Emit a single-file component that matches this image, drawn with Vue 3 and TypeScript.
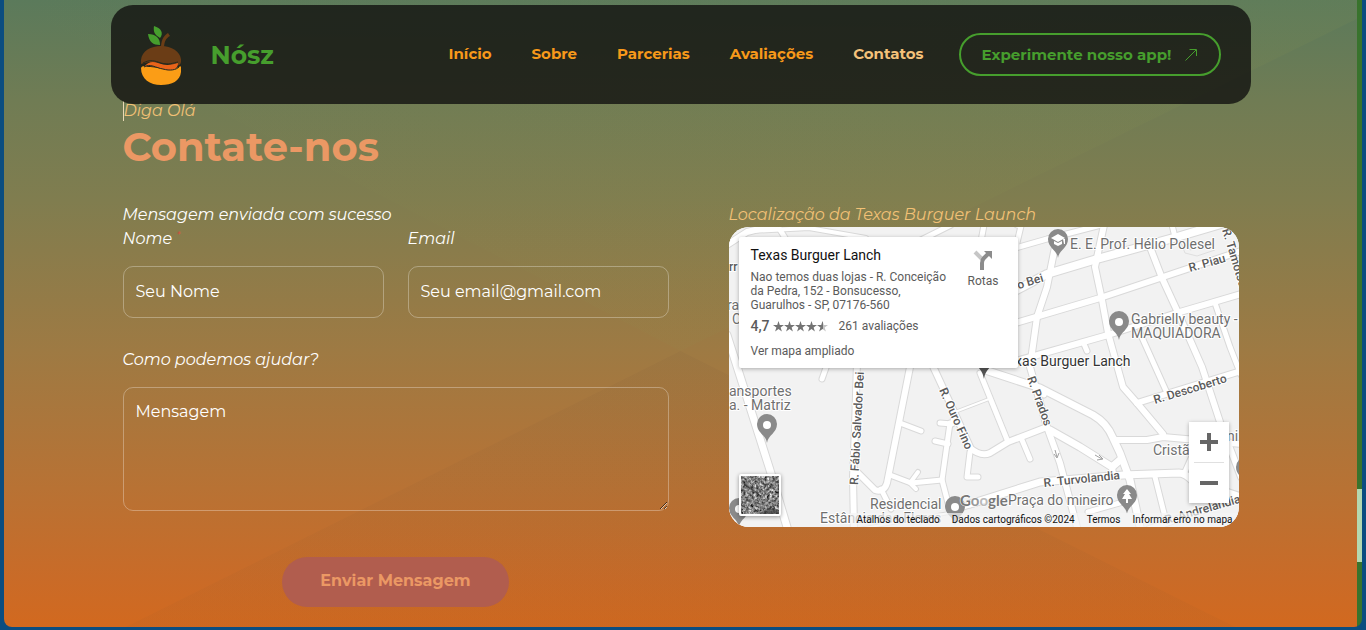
<script setup lang="ts">
import { ref } from 'vue'

interface NavItem { label: string; href: string; active?: boolean }
interface Road { d: string; w: number }
interface Label { text: string; x: number; y: number; rotate?: number; kind: 'poi' | 'street' | 'dark' }

const nav: NavItem[] = [
  { label: 'Início', href: '#inicio' },
  { label: 'Sobre', href: '#sobre' },
  { label: 'Parcerias', href: '#parcerias' },
  { label: 'Avaliações', href: '#avaliacoes' },
  { label: 'Contatos', href: '#contatos', active: true },
]

const nome = ref('')
const email = ref('')
const mensagem = ref('')

const roads: Road[] = [
  { d: 'M280 67 L318 47 L368 32 L448 10 L492 -3', w: 8 },
  { d: 'M280 23 L318 12 L372 -2', w: 5 },
  { d: 'M326 20 L318 60 L308 90 L301 140 L318 200 L331 236 L348 300', w: 6 },
  { d: 'M375 -2 L366 40 L373 73 L379 106 L389 142 L394 160 L408 176 L434 207', w: 6 },
  { d: 'M280 98 L371 71 L431 51 L512 24', w: 6 },
  { d: 'M280 136 L379 108 L451 85 L512 67', w: 6 },
  { d: 'M421 20 L433 51 L451 90 L473 140 L491 195 L512 250', w: 6 },
  { d: 'M486 76 L501 120 L512 148', w: 5 },
  { d: 'M411 106 L438 166', w: 5 },
  { d: 'M355 117 L358 124', w: 5 },
  { d: 'M443 -2 L446 10', w: 5 },
  { d: 'M288 -2 L292 -1 L287 20', w: 5 },
  { d: 'M408 176 L512 144', w: 6 },
  { d: 'M256 143 L311 161 L364 188 Q378 196 384 211 L391 226 L401 253 L411 300', w: 7 },
  { d: 'M318 200 L279 215 L261 226 Q252 230 241 221', w: 6 },
  { d: 'M321 203 L351 220 L383 240 L391 233', w: 7 },
  { d: 'M383 240 L384 247', w: 6 },
  { d: 'M386 213 L418 213 L434 210 L512 217', w: 6 },
  { d: 'M241 277 L311 255 L394 248 L450 246 Q456 246 464 254 L512 270', w: 7 },
  { d: 'M455 247 L468 218', w: 5 },
  { d: 'M426 250 L436 290', w: 5 },
  { d: 'M251 146 L279 215', w: 5 },
  { d: 'M311 161 L315 168', w: 5 },
  { d: 'M293 213 L301 232', w: 5 },
  { d: 'M420 302 L512 270', w: 6 },
  { d: 'M359 285 L394 275', w: 5 },
  { d: 'M-2 108 L41 243 L58 300', w: 7 },
  { d: 'M128 135 L126 200 L124 250 L125 302', w: 6 },
  { d: 'M182 135 L158 256 Q155 266 146 263 L126 243', w: 6 },
  { d: 'M152 262 L162 282', w: 5 },
  { d: 'M171 196 L192 204', w: 5 },
  { d: 'M161 248 L182 256 L213 253', w: 5 },
  { d: 'M189 245 L181 256 L187 262', w: 4 },
  { d: 'M221 196 L213 253 L219 276', w: 5 },
  { d: 'M211 196 L223 197 L226 187', w: 5 },
  { d: 'M206 214 L219 217', w: 5 },
  { d: 'M202 135 L221 176 L241 220', w: 6 },
  { d: 'M241 225 L238 250 L249 250', w: 5 },
  { d: 'M226 185 L260 172', w: 2 },
  { d: 'M99 135 L93 152', w: 5 },
  { d: 'M-2 18 L18 5 L50 -3', w: 6 },
  { d: 'M22 4 L80 1 L137 11', w: 4 },
  { d: 'M48 -2 L58 14', w: 5 },
  { d: 'M190 14 L222 -2', w: 5 },
  { d: 'M255 -2 L252 14', w: 5 },
  { d: 'M130 302 L220 286 L252 276', w: 2 },
]

const labels: Label[] = [
  { text: 'E. E. Prof. Hélio Polesel', x: 341, y: 22, kind: 'poi' },
  { text: 'Gabrielly beauty -', x: 402, y: 97, kind: 'poi' },
  { text: 'MAQUIADORA', x: 402, y: 111, kind: 'poi' },
  { text: 'Texas Burguer Lanch', x: 271, y: 139, kind: 'dark' },
  { text: 'ansportes', x: 0, y: 169, kind: 'poi' },
  { text: 'a. - Matriz', x: 0, y: 183, kind: 'poi' },
  { text: 'Residencial', x: 141, y: 282, kind: 'poi' },
  { text: 'Estância das Flores', x: 91, y: 296, kind: 'poi' },
  { text: 'Praça do mineiro', x: 279, y: 278, kind: 'poi' },
  { text: 'ni', x: 498, y: 214, kind: 'poi' },
  { text: 'Cristã do Re', x: 424, y: 228, kind: 'poi' },
  { text: 'ra', x: -2, y: 83, kind: 'poi' },
  { text: 'a C', x: -8, y: 97, kind: 'poi' },
  { text: 'Arr', x: -8, y: 44, kind: 'street' },
  { text: 'R. Piau', x: 461, y: 45, rotate: -16, kind: 'street' },
  { text: 'R. Descoberto', x: 426, y: 177, rotate: -17, kind: 'street' },
  { text: 'R. Turvolandia', x: 315, y: 260, rotate: -6, kind: 'street' },
  { text: 'R. Andrelandia', x: 437, y: 297, rotate: -16, kind: 'street' },
  { text: 'R. Prados', x: 298, y: 151, rotate: 70, kind: 'street' },
  { text: 'R. Ouro Fino', x: 210, y: 163, rotate: 66, kind: 'street' },
  { text: 'R. Fábio Salvador Bei', x: 129, y: 258, rotate: -87, kind: 'street' },
  { text: 'R. Tamotsu', x: 493, y: 3, rotate: 73, kind: 'street' },
  { text: 'R. Salgado Bei', x: 241, y: 77, rotate: -17, kind: 'street' },
]

const pins = [
  { x: 329, y: 14, icon: 'school' },
  { x: 390, y: 96, icon: 'dot' },
  { x: 38, y: 199, icon: 'dot' },
  { x: 10, y: 283, icon: 'dot' },
  { x: 226, y: 281, icon: 'dot' },
  { x: 398, y: 270, icon: 'tree' },
  { x: 517, y: 242, icon: 'dot' },
]
</script>

<template>
  <div class="frame">
    <div class="page">
      <header class="bar">
        <a class="brand" href="#inicio">
          <svg class="logo" viewBox="0 0 40 60" aria-hidden="true">
            <path d="M13 1 C20 3 23 8 19 13 C14 10 12 7 13 1Z" fill="#469e2d" />
            <path d="M7 9 C15 9 19 13 19 20 C12 20 8 17 7 9Z" fill="#469e2d" />
            <path d="M20 23 C20 16 22 11 27 8 L29 11 C25 13 23 17 23 23Z" fill="#6b3d16" />
            <path d="M0 38 C-1 27 9 21 20 21 C32 21 41 28 40 37 C39 41 37 41 34 40 C24 40 14 34 0 39Z" fill="#6b3d16" />
            <path d="M0 43 C2 40 4 42 7 42 C18 41 26 48 38 42 C41 39 40 45 40 47 C39 56 31 60 20 60 C9 60 0 54 0 43Z" fill="#fb9d16" />
            <path d="M3 42 C7 37 11 36 17 38 C25 41 31 40 37 38 C37 44 32 46 25 45 C17 43 10 39 3 42Z" fill="#e9641a" />
            <path d="M3 42 C9 38 15 43 22 44 C29 46 35 45 38 42" fill="none" stroke="#252b1f" stroke-width="1" />
            <path d="M2 38 C9 34 14 36 20 38 C27 40 33 38 37 37" fill="none" stroke="#252b1f" stroke-width="1" />
          </svg>
          <span>Nósz</span>
        </a>
        <nav class="menu">
          <a v-for="item in nav" :key="item.label" :href="item.href" :class="{ active: item.active }">{{ item.label }}</a>
        </nav>
        <a class="app-link" href="#app">
          <span>Experimente nosso app!</span>
          <svg viewBox="0 0 12 12" aria-hidden="true"><path d="M.5 11.5 L11 1 M4.500 .5 H11.500 V7" fill="none" stroke="currentColor" /></svg>
        </a>
      </header>

      <main class="content">
        <p class="hello">Diga Olá</p>
        <h1>Contate-nos</h1>

        <div class="columns">
          <form class="form" @submit.prevent>
            <p class="status">Mensagem enviada com sucesso</p>
            <div class="fields">
              <div class="field">
                <label for="nome">Nome <sup>*</sup></label>
                <input id="nome" v-model="nome" type="text" placeholder="Seu Nome" />
              </div>
              <div class="field">
                <label for="email">Email</label>
                <input id="email" v-model="email" type="email" placeholder="Seu email@gmail.com" />
              </div>
            </div>
            <div class="field">
              <label for="mensagem">Como podemos ajudar?</label>
              <textarea id="mensagem" v-model="mensagem" placeholder="Mensagem"></textarea>
            </div>
            <button class="send" type="submit">Enviar Mensagem</button>
          </form>

          <section class="place">
            <p class="place-title">Localização da Texas Burguer Launch</p>
            <div class="map">
              <svg class="tiles" viewBox="0 0 510 300" preserveAspectRatio="xMinYMin slice">
                <rect width="510" height="300" fill="#f2f2f2" />
                <g fill="none" stroke="#d9d9d9" stroke-linecap="round" stroke-linejoin="round">
                  <path v-for="(r, i) in roads" :key="i" :d="r.d" :stroke-width="r.w + 2" />
                </g>
                <g fill="none" stroke="#fff" stroke-linecap="round" stroke-linejoin="round">
                  <path v-for="(r, i) in roads" :key="i" :d="r.d" :stroke-width="r.w" />
                </g>
                <path d="M452 16 L456 26 L468 29 L486 23 M458 17 L461 23 L480 18" fill="none" stroke="#dedede" />
                <g fill="none" stroke="#a0a0a0" stroke-width="1">
                  <path d="M326 223 L328 230 M325 227 L328 231 L330 226" />
                  <path d="M366 228 L373 232 M370 228 L374 232 L368 233" />
                </g>
                <g v-for="(p, i) in pins" :key="i" :transform="`translate(${p.x} ${p.y})`">
                  <path d="M0 17 C-1 9 -10 7 -10 -2 A10 10 0 0 1 10 -2 C10 7 1 9 0 17Z" fill="#8a8a8a" />
                  <circle v-if="p.icon === 'dot'" cy="-1" r="4" fill="#fff" />
                  <path v-else-if="p.icon === 'school'" d="M-7 -3 L0 -7 L7 -3 L0 1Z M-4 0 L0 2 L4 0 V3 L0 5 L-4 3Z M5 -2 H7 V3 H6Z" fill="#fff" />
                  <path v-else d="M0 -8 L4 -3 H2 L5 2 H1 V6 H-1 V2 H-5 L-2 -3 H-4Z" fill="#fff" />
                </g>
                <path d="M245 130 H265 C264 142 257 140 255 152 C253 140 247 142 245 130Z" fill="#555" />
                <text
                  v-for="l in labels"
                  :key="l.text"
                  :class="l.kind"
                  :transform="`translate(${l.x} ${l.y}) rotate(${l.rotate ?? 0})`"
                >{{ l.text }}</text>
                <text class="google" x="231" y="279">G<tspan fill="#999">o</tspan><tspan fill="#bbb">o</tspan>gle</text>
              </svg>

              <article class="card">
                <div class="card-main">
                  <h2>Texas Burguer Lanch</h2>
                  <address>Nao temos duas lojas - R. Conceição da Pedra, 152 - Bonsucesso, Guarulhos - SP, 07176-560</address>
                  <div class="rating">
                    <b>4,7</b>
                    <svg viewBox="0 0 55 11" role="img" aria-label="4,7 de 5">
                      <defs>
                        <linearGradient id="half"><stop offset=".55" stop-color="#737373" /><stop offset=".55" stop-color="#c4c4c4" /></linearGradient>
                      </defs>
                      <path
                        v-for="n in 5"
                        :key="n"
                        d="M5.500 0 L6.800 4 H11 L7.600 6.500 L8.900 10.500 L5.500 8 L2.100 10.500 L3.400 6.500 L0 4 H4.200Z"
                        :transform="`translate(${(n - 1) * 11} 0)`"
                        :fill="n === 5 ? 'url(#half)' : '#737373'"
                      />
                    </svg>
                    <a href="#avaliacoes">261 avaliações</a>
                  </div>
                  <a href="#mapa">Ver mapa ampliado</a>
                </div>
                <a class="routes" href="#rotas">
                  <svg viewBox="0 0 20 20" aria-hidden="true">
                    <path d="M2 2 L10 10" stroke="#c6c6c6" stroke-width="4" />
                    <path d="M9 20 V13 Q9 10 11 8 L15 4" fill="none" stroke="#8c8c8c" stroke-width="4" />
                    <path d="M11 1 H19 V9Z" fill="#8c8c8c" />
                  </svg>
                  <span>Rotas</span>
                </a>
              </article>

              <button class="satellite" type="button" aria-label="Mostrar imagens de satélite">
                <svg viewBox="0 0 38 38" aria-hidden="true">
                  <filter id="grain" x="0" y="0" width="1" height="1" color-interpolation-filters="sRGB">
                    <feTurbulence type="fractalNoise" baseFrequency=".38" numOctaves="3" seed="7" />
                    <feColorMatrix values="1.1 .6 0 0 -.35  1.100 .6 0 0 -.35  1.100 .6 0 0 -.35  0 0 0 0 1" />
                  </filter>
                  <rect width="38" height="38" filter="url(#grain)" />
                  <path d="M3 8 L16 17" stroke="#333" stroke-width="2" opacity=".6" />
                  <path d="M18 38 L28 32 L38 34 V38Z" fill="#333" opacity=".6" />
                </svg>
              </button>

              <div class="zoom">
                <button type="button" aria-label="Aumentar o zoom"><svg viewBox="0 0 18 18"><path d="M7 0H11V7H18V11H11V18H7V11H0V7H7Z" /></svg></button>
                <button type="button" aria-label="Diminuir o zoom"><svg viewBox="0 0 18 18"><path d="M0 7H18V11H0Z" /></svg></button>
              </div>

              <footer class="credits">
                <button type="button">Atalhos do teclado</button>
                <span>Dados cartográficos ©2024</span>
                <a href="#termos">Termos</a>
                <a href="#erro">Informar erro no mapa</a>
              </footer>
            </div>
          </section>
        </div>
      </main>
    </div>
    <div class="track"><div class="thumb"></div></div>
  </div>
</template>

<style>
body {
  background: #0b4d80;
}
</style>

<style scoped>
* {
  box-sizing: border-box;
}

.frame {
  display: flex;
  min-height: calc(100vh - 3px);
  margin: 0 4px 3px;
  overflow: hidden;
  border-radius: 0 0 8px 8px;
  font-family: Montserrat, Inter, "Liberation Sans", sans-serif;
}

.page {
  position: relative;
  z-index: 0;
  flex: 1;
  min-width: 0;
  padding: 5px 24px 20px;
  background: linear-gradient(#5b7a5b, #707c54 16%, #807d4f 32%, #9e7a43 56%, #b87234 78%, #c96b28 92%, #d2691f);
}

.page::before,
.page::after {
  content: "";
  position: absolute;
  z-index: -1;
  inset: 0;
}

.page::before {
  clip-path: polygon(0 0, 50% 56%, 100% 3%, 100% 0);
  background: linear-gradient(100deg, rgba(140, 150, 80, 0), rgba(140, 150, 80, 0.12));
}

.page::after {
  clip-path: polygon(9% 100%, 50% 56%, 91% 100%);
  background: linear-gradient(rgba(100, 90, 75, 0.12), rgba(150, 90, 40, 0.08));
}

.bar {
  position: relative;
  z-index: 1;
  display: flex;
  align-items: center;
  max-width: 1140px;
  height: 99px;
  margin: 0 auto;
  padding: 0 30px;
  border-radius: 22px;
  background: rgba(18, 18, 16, 0.81);
}

a {
  color: inherit;
  text-decoration: none;
}

.brand {
  display: flex;
  align-items: center;
  gap: 30px;
  color: #469e2d;
  font-size: 25px;
  font-weight: 700;
}

.logo {
  width: 40px;
  height: 60px;
}

.menu {
  display: flex;
  gap: 40px;
  margin: 0 35px 0 auto;
  padding-bottom: 2px;
  color: #f7991a;
  font-size: 15px;
  font-weight: 700;
}

.active {
  color: #f5c27a;
}

.app-link {
  display: flex;
  align-items: center;
  justify-content: center;
  gap: 14px;
  width: 262px;
  height: 43px;
  border: 2px solid #469e2d;
  border-radius: 22px;
  color: #469e2d;
  font-size: 15px;
  font-weight: 700;
}

.app-link svg {
  width: 12px;
  height: 12px;
}

.content {
  max-width: 1116px;
  margin: -4px auto 0;
  color: #fff;
}

p {
  margin: 0;
  font-size: 16px;
  font-style: italic;
  line-height: 24px;
}

.hello {
  width: max-content;
  margin-top: 1px;
  border-left: 1px solid #e9d9b5;
  color: #f2c176;
  line-height: 20px;
}

h1 {
  margin: 1px 0 31px;
  color: #eb9864;
  font-size: 40px;
  font-weight: 700;
  line-height: 50px;
}

.columns {
  display: grid;
  grid-template-columns: 546fr 510fr;
  gap: 60px;
}

.form {
  display: flex;
  flex-direction: column;
}

.fields {
  display: grid;
  grid-template-columns: 1fr 1fr;
  gap: 24px;
  margin-bottom: 30px;
}

.field {
  display: flex;
  flex-direction: column;
  gap: 15px;
}

label,
.status {
  font-size: 16px;
  font-style: italic;
  font-weight: 400;
  line-height: 24px;
}

sup {
  color: #e0453a;
  font-size: 10px;
  line-height: 0;
}

input,
textarea {
  width: 100%;
  border: 1px solid rgba(255, 255, 255, 0.3);
  border-radius: 10px;
  outline: 0;
  background: transparent;
  color: #fff;
  font: 400 16px/24px Montserrat, Inter, "Liberation Sans", sans-serif;
}

input {
  height: 52px;
  padding: 0 12px 2px;
}

textarea {
  display: block;
  height: 124px;
  padding: 12px;
}

::placeholder {
  color: #fff;
  opacity: 1;
}

.send {
  align-self: center;
  width: 227px;
  height: 50px;
  margin-top: 46px;
  padding-bottom: 3px;
  border: 0;
  border-radius: 25px;
  background: #b15d4e;
  color: #eb9864;
  font: 700 16px/24px Montserrat, Inter, "Liberation Sans", sans-serif;
}

.place-title {
  color: #f2c176;
}

.map {
  position: relative;
  height: 300px;
  overflow: hidden;
  border-radius: 20px;
  background: #f2f2f2;
  font-family: Roboto, sans-serif;
}

.tiles {
  display: block;
  width: 100%;
  height: 100%;
}

.tiles text {
  paint-order: stroke;
  stroke: #fff;
  stroke-width: 2px;
  stroke-linejoin: round;
}

.poi {
  fill: #6f6f6f;
  font-size: 14px;
}

.dark {
  fill: #333;
  font-size: 14px;
}

.street {
  fill: #5a5a5a;
  font-size: 12px;
  font-weight: 500;
}

.tiles .google {
  fill: #777;
  stroke-width: 1px;
  font: 700 15px Lato, sans-serif;
}

.card {
  position: absolute;
  top: 10px;
  left: 10px;
  display: flex;
  justify-content: space-between;
  width: 279px;
  height: 131px;
  padding: 10px 19px 0 12px;
  border-radius: 2px;
  background: #fff;
  box-shadow: 0 1px 4px rgba(0, 0, 0, 0.3);
  color: #5b5b5b;
  font-size: 12px;
  line-height: 14px;
}

.card-main {
  width: 198px;
}

h2 {
  margin: 0 0 6px;
  color: #111;
  font-size: 14px;
  font-weight: 400;
  line-height: 17px;
}

address {
  font-style: normal;
}

.rating {
  display: flex;
  align-items: center;
  height: 16px;
  margin: 6px 0 10px;
}

.rating b {
  font-size: 14px;
  font-weight: 500;
}

.rating svg {
  width: 55px;
  height: 11px;
  margin: 0 11px 0 3px;
}

.routes {
  display: flex;
  flex-direction: column;
  align-items: center;
  gap: 4px;
  padding-top: 3px;
}

.routes svg {
  width: 20px;
  height: 20px;
}

.satellite {
  position: absolute;
  bottom: 11px;
  left: 10px;
  width: 42px;
  height: 42px;
  padding: 0;
  border: 2px solid #fff;
  border-radius: 2px;
  background: #777;
  box-shadow: 0 1px 4px rgba(0, 0, 0, 0.4);
}

.satellite svg {
  display: block;
}

.zoom {
  position: absolute;
  right: 10px;
  bottom: 24px;
  width: 40px;
  background: #fff;
  box-shadow: 0 1px 4px rgba(0, 0, 0, 0.3);
}

.zoom button {
  display: grid;
  place-items: center;
  width: 40px;
  height: 40px;
  padding: 0;
  border: 0;
  background: none;
}

.zoom button + button {
  margin-top: 1px;
}

.zoom button + button::before {
  content: "";
  position: absolute;
  top: 40px;
  width: 30px;
  height: 1px;
  background: #e0e0e0;
}

.zoom svg {
  width: 18px;
  height: 18px;
  fill: #666;
}

.credits {
  position: absolute;
  right: 0;
  bottom: 0;
  display: flex;
  gap: 12px;
  padding: 0 6px;
  background: rgba(245, 245, 245, 0.7);
  color: #111;
  font-size: 10px;
  line-height: 14px;
}

.credits button {
  padding: 0;
  border: 0;
  background: none;
  color: inherit;
  font: inherit;
}

.track {
  width: 5px;
  background: #39732d;
}

.thumb {
  height: 73px;
  margin-top: 489px;
  background: #b4d8b0;
}
</style>
